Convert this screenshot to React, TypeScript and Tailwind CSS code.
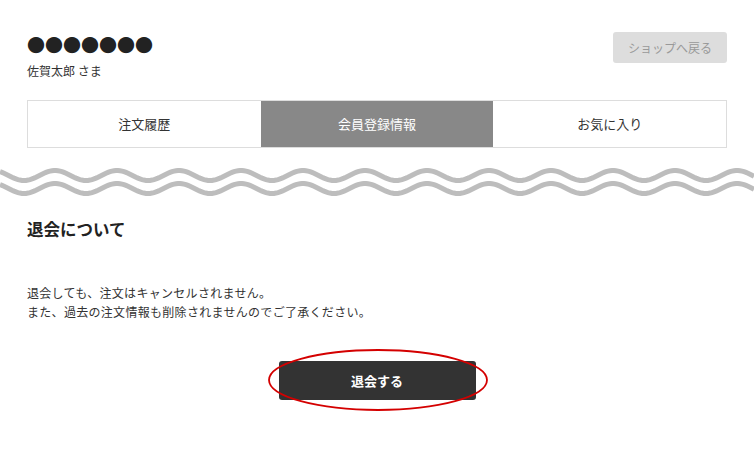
import React from 'react';

const font = { fontFamily: '"Noto Sans CJK JP", "Noto Sans", sans-serif' };

function wavePath(center: number, amp: number, period: number, phase: number, width: number) {
  const pts: string[] = [];
  for (let x = 0; x <= width; x += 2) {
    const y = center - amp * Math.cos((2 * Math.PI * (x - phase)) / period);
    pts.push(`${x},${y.toFixed(2)}`);
  }
  return 'M' + pts.join(' L');
}

function Wave() {
  return (
    <svg width="754" height="34" viewBox="0 0 754 34" className="block">
      <path d={wavePath(9.5, 5, 62, 55, 754)} fill="none" stroke="#bdbdbd" strokeWidth="5" />
      <path d={wavePath(22.5, 5, 62, 55, 754)} fill="none" stroke="#bdbdbd" strokeWidth="5" />
    </svg>
  );
}

const tabs = ['注文履歴', '会員登録情報', 'お気に入り'];

export default function App() {
  return (
    <div className="w-[754px] h-[452px] bg-white text-[#333] overflow-hidden" style={font}>
      <header className="flex justify-between px-[27px] pt-[31px]">
        <div>
          <p className="text-[18px] leading-[26px] text-[#222]">●●●●●●●</p>
          <p className="mt-[5px] text-[12px] leading-[18px]">佐賀太郎 さま</p>
        </div>
        <button className="mt-[1px] w-[114px] h-[31px] rounded-[3px] bg-[#dddddd] text-[12px] text-[#999]">
          ショップへ戻る
        </button>
      </header>

      <nav className="mx-[27px] mt-[20px] grid grid-cols-3 border border-[#dddddd] h-[48px]">
        {tabs.map((t, i) => (
          <div
            key={t}
            className={
              i === 1
                ? 'flex items-center justify-center bg-[#888888] text-white text-[13px]'
                : 'flex items-center justify-center bg-white text-[13px]'
            }
          >
            {t}
          </div>
        ))}
      </nav>

      <div className="mt-[18px]">
        <Wave />
      </div>

      <section className="px-[27px] pt-[17px]">
        <h2 className="text-[16.5px] font-bold leading-[24px] text-[#222]">退会について</h2>
        <div className="mt-[42px] text-[12px] leading-[19px] tracking-[0.3px]">
          <p>退会しても、注文はキャンセルされません。</p>
          <p>また、過去の注文情報も削除されませんのでご了承ください。</p>
        </div>
        <div className="relative mt-[40px] flex justify-center">
          <button className="w-[197px] h-[39px] rounded-[3px] bg-[#333333] text-white text-[13px] font-bold">
            退会する
          </button>
          <svg
            width="222"
            height="64"
            viewBox="0 0 222 64"
            className="absolute left-[calc(50%-110px)] top-[-13px] pointer-events-none"
          >
            <ellipse cx="111" cy="32" rx="109" ry="30" fill="none" stroke="#d40000" strokeWidth="1.8" />
          </svg>
        </div>
      </section>
    </div>
  );
}
